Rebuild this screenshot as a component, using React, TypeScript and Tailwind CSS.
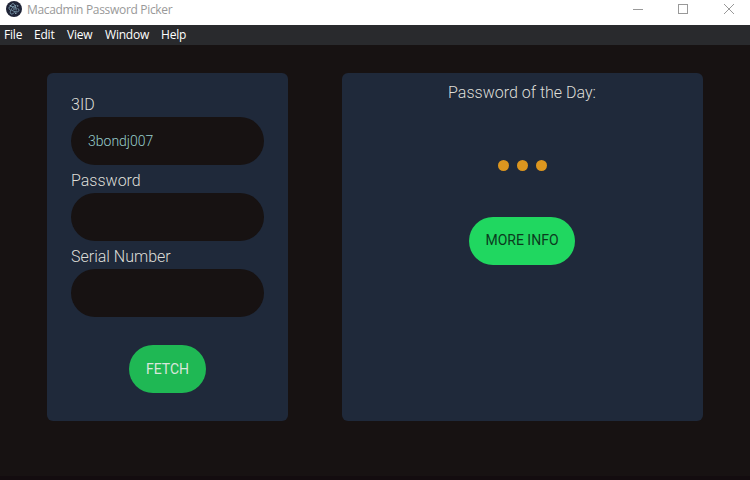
import { useState } from "react";

const MENU = [
  { label: "File", box: "w-[30px]" },
  { label: "Edit", box: "w-[33px]" },
  { label: "View", box: "w-[38px]" },
  { label: "Window", box: "w-[56px]" },
  { label: "Help", box: "w-[30px]" },
];

function AppIcon() {
  return (
    <svg className="size-4 shrink-0" viewBox="0 0 16 16" fill="none">
      <circle cx="8" cy="8" r="8" fill="#1f2437" />
      <g stroke="#86a9bd" strokeWidth="0.8" strokeLinecap="round">
        <path d="M4.300 9.200C3 8 2.700 6.900 3.200 6.200c.9-1.300 4-.9 7 .8" />
        <path d="M5.500 4.200c.2-1.200.8-1.800 1.600-1.600 1.500.3 2.900 3.100 3.100 6.400" />
        <path d="M12 7.500c1 1.100 1.200 2 .7 2.700-.9 1.200-4 .8-6.900-.9" />
        <path d="M10 4.200c-1.700.2-4.200 2.600-5.300 5.200-.7 1.800-.6 3.100.2 3.500.8.500 2.200-.1 3.600-1.500" />
      </g>
      <g fill="#a9c8d6">
        <circle cx="8" cy="8" r="0.7" />
        <circle cx="4.300" cy="4.600" r="0.7" />
        <circle cx="11.700" cy="4.900" r="0.7" />
        <circle cx="9.800" cy="12.300" r="0.7" />
      </g>
    </svg>
  );
}

function TitleBar() {
  return (
    <header className="flex h-[25px] items-start bg-white pl-1.5 font-['Open_Sans',sans-serif] font-normal">
      <div className="flex items-start gap-[5px] pt-px">
        <AppIcon />
        <h1 className="pt-px text-xs leading-4 font-normal whitespace-nowrap tracking-[-0.32px] text-[#999]">
          Macadmin Password Picker
        </h1>
      </div>
      <svg className="mt-[3px] mr-[15px] ml-auto h-3 w-[103px]" viewBox="0 0 103 12" fill="none" stroke="#999">
        <path d="M1 6.500h10M46.500 1.500h9v9h-9z" shapeRendering="crispEdges" />
        <path d="M92 1l10 10M102 1L92 11" />
      </svg>
    </header>
  );
}

function MenuBar() {
  return (
    <nav className="flex h-5 items-center bg-[#292a2d] pl-1 font-['Open_Sans',sans-serif] text-xs font-normal tracking-[-0.2px] text-white">
      {MENU.map((m) => (
        <span key={m.label} className={`${m.box} whitespace-nowrap`}>
          {m.label}
        </span>
      ))}
    </nav>
  );
}

function Field({ label, type = "text", initial = "" }: { label: string; type?: string; initial?: string }) {
  const [value, setValue] = useState(initial);
  return (
    <label className="block">
      <span className="block h-7 pt-1 text-base leading-6 text-[#deded8]">{label}</span>
      <input
        type={type}
        value={value}
        onChange={(e) => setValue(e.target.value)}
        className="block h-12 w-full rounded-full bg-[#171212] px-[17px] text-sm font-light text-[#96cccc] outline-none"
      />
    </label>
  );
}

export default function App() {
  return (
    <div className="flex h-[480px] w-[750px] flex-col overflow-hidden bg-[#171212] font-['Roboto',sans-serif] font-light">
      <TitleBar />
      <MenuBar />
      <main className="flex flex-1 items-start gap-[54px] px-[47px] pt-7">
        <section className="flex h-[348px] w-[241px] flex-col items-center rounded-md bg-[#1f293a] px-6 pt-4">
          <div className="w-full">
            <Field label="3ID" initial="3bondj007" />
            <Field label="Password" type="password" />
            <Field label="Serial Number" />
          </div>
          <button className="mt-7 h-12 w-[77px] rounded-full bg-[#1fb854] text-sm font-normal text-[#d9e6dc]">
            FETCH
          </button>
        </section>
        <section className="flex h-[348px] w-[361px] flex-col items-center rounded-md bg-[#1f293a] pt-2 pr-px">
          <h2 className="text-base leading-6 text-[#deded8]">Password of the Day:</h2>
          <div className="mt-[55px] mb-[46px] flex gap-2 pl-px">
            <i className="size-[11px] rounded-full bg-[#dc961f]" />
            <i className="size-[11px] rounded-full bg-[#dc961f]" />
            <i className="size-[11px] rounded-full bg-[#dc961f]" />
          </div>
          <button className="h-12 w-[106px] rounded-full bg-[#20d760] pb-0.5 text-sm font-normal text-[#0b3b1e]">
            MORE INFO
          </button>
        </section>
      </main>
      <footer className="h-1 bg-[#130c0f]" />
    </div>
  );
}
